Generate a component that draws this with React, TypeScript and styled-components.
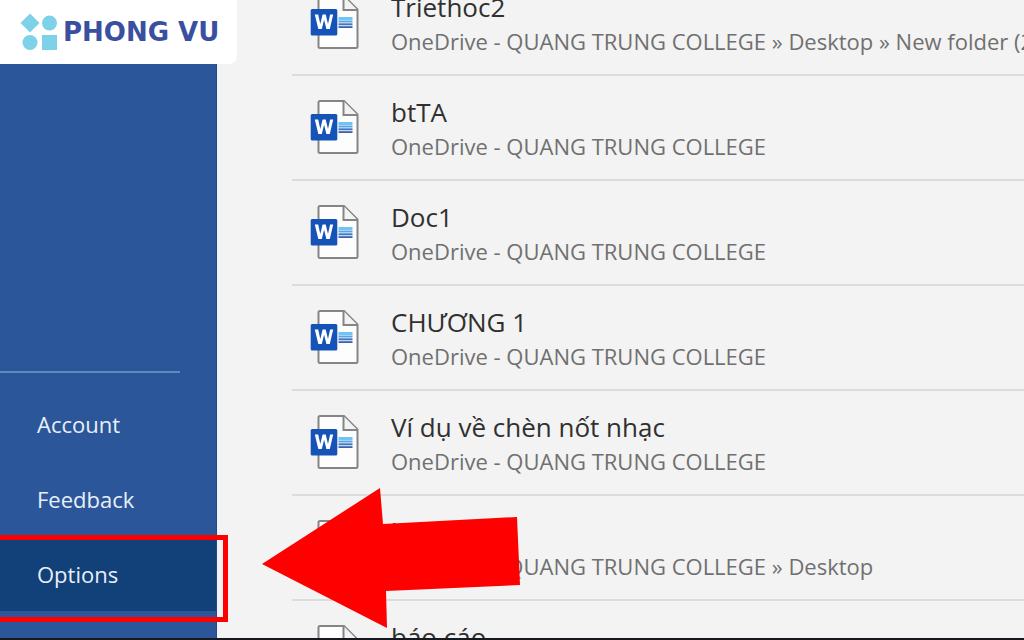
import React from 'react';
import styled, { createGlobalStyle } from 'styled-components';

const GlobalStyle = createGlobalStyle`
  *, *::before, *::after { box-sizing: border-box; }
  body { margin: 0; background: #f3f3f3; }
  body, button { font-family: "Open Sans", "Noto Sans", sans-serif; }
`;

const Screen = styled.div`
  position: relative;
  display: flex;
  height: 100vh;
  overflow: hidden;
  border-bottom: 2px solid #15181f;
`;

const Sidebar = styled.aside`
  display: flex;
  flex-direction: column;
  flex: none;
  width: 217px;
  background: #2b579a;
  border-right: 1px solid #204a8c;
`;

const Nav = styled.nav`
  display: flex;
  flex-direction: column;
  margin-top: auto;
  padding-bottom: 27px;
`;

const Divider = styled.hr`
  width: 180px;
  height: 2px;
  margin: 0 0 13px;
  border: 0;
  background: #6289bd;
`;

const NavButton = styled.button<{ $active?: boolean }>`
  height: 75px;
  padding: 0 37px;
  border: 0;
  background: ${(p) => (p.$active ? '#124078' : 'transparent')};
  color: #e9eff8;
  font-size: 22px;
  line-height: 30px;
  text-align: left;
`;

const Main = styled.main`
  flex: 1;
  min-width: 0;
  padding-left: 75px;
`;

const FileList = styled.ul`
  margin: -29px 0 0;
  padding: 0;
  list-style: none;
`;

const FileRow = styled.li`
  border-bottom: 2px solid #dcdcdc;
`;

const FileLink = styled.a`
  display: flex;
  align-items: center;
  gap: 31px;
  height: 103px;
  padding-left: 18px;
  color: inherit;
  text-decoration: none;
  white-space: nowrap;
`;

const FileText = styled.div`
  display: flex;
  flex-direction: column;
`;

const FileName = styled.span`
  color: #303030;
  font-size: 26px;
  line-height: 36px;
`;

const FilePath = styled.span`
  color: #707070;
  font-size: 22px;
  line-height: 32px;
`;

const Icon = styled.svg`
  flex: none;
`;

const Brand = styled.header`
  position: absolute;
  top: 0;
  left: 0;
  display: flex;
  align-items: center;
  gap: 5px;
  width: 237px;
  height: 64px;
  padding-left: 20px;
  border-radius: 0 0 8px 0;
  background: #fff;
`;

const BrandName = styled.span`
  color: #3b4fa0;
  font-family: "DejaVu Sans", sans-serif;
  font-size: 26px;
  font-weight: 700;
  line-height: 30px;
  white-space: nowrap;
`;

const Highlight = styled.div`
  position: absolute;
  bottom: 16px;
  left: 0;
  width: 228px;
  height: 87px;
  border: 5px solid #fe0000;
  border-left: 0;
  pointer-events: none;
`;

const Arrow = styled.svg`
  position: absolute;
  bottom: 9px;
  left: 262px;
  pointer-events: none;
`;

const files = [
  { name: 'Triethoc2', path: 'OneDrive - QUANG TRUNG COLLEGE » Desktop » New folder (2)' },
  { name: 'btTA', path: 'OneDrive - QUANG TRUNG COLLEGE' },
  { name: 'Doc1', path: 'OneDrive - QUANG TRUNG COLLEGE' },
  { name: 'CHƯƠNG 1', path: 'OneDrive - QUANG TRUNG COLLEGE' },
  { name: 'Ví dụ về chèn nốt nhạc', path: 'OneDrive - QUANG TRUNG COLLEGE' },
  { name: 'b', path: 'OneDrive - QUANG TRUNG COLLEGE » Desktop' },
  { name: 'báo cáo', path: 'OneDrive - QUANG TRUNG COLLEGE' },
];

function WordIcon() {
  return (
    <Icon width="50" height="56" viewBox="0 0 50 56" aria-hidden="true">
      <path d="M10 1H34L47.500 14.500V51.500Q47.500 53 46 53H10Q8.500 53 8.500 51.500V2.500Q8.500 1 10 1Z" fill="#fdfdfd" stroke="#858585" strokeWidth="2" />
      <path d="M33.500 1V15H47.500" fill="#f3f3f3" stroke="#858585" strokeWidth="2" />
      <path d="M28.500 22H42.500V25H28.500Z" fill="#6fc4f6" />
      <path d="M28.500 25.500H42.500V27.500H28.500Z" fill="#5aa2e4" />
      <path d="M28.500 28.300H42.500V30.300H28.500Z" fill="#3f78c8" />
      <path d="M28.500 31.200H42.500V33H28.500Z" fill="#3a62ac" />
      <rect x="0.700" y="14" width="26.600" height="26.500" rx="1.500" fill="#1553b8" />
      <path d="M4.800 19.500H8.200L10.300 29L12.600 19.500H15.700L18 29L20.100 19.500H23.200L19.800 34H16.400L14.100 24.800L11.800 34H8.300Z" fill="#fff" />
    </Icon>
  );
}

export default function App() {
  return (
    <>
      <GlobalStyle />
      <Screen>
        <Sidebar>
          <Nav>
            <Divider />
            <NavButton type="button">Account</NavButton>
            <NavButton type="button">Feedback</NavButton>
            <NavButton type="button" $active>Options</NavButton>
          </Nav>
        </Sidebar>
        <Main>
          <FileList>
            {files.map((file) => (
              <FileRow key={file.name}>
                <FileLink href="#">
                  <WordIcon />
                  <FileText>
                    <FileName>{file.name}</FileName>
                    <FilePath>{file.path}</FilePath>
                  </FileText>
                </FileLink>
              </FileRow>
            ))}
          </FileList>
        </Main>
        <Brand>
          <Icon width="38" height="38" viewBox="0 0 38 38" aria-hidden="true">
            <g fill="#7dd2ea">
              <path d="M10 0.500L19.500 10L10 19.500L0.500 10Z" />
              <circle cx="29.500" cy="10" r="7.500" />
              <circle cx="10" cy="29.500" r="7.500" />
              <rect x="22" y="22" width="15" height="15" />
            </g>
          </Icon>
          <BrandName>PHONG VU</BrandName>
        </Brand>
        <Highlight />
        <Arrow width="259" height="141" viewBox="0 0 259 141" aria-hidden="true">
          <path d="M0 76L118 0L121 36L255 29L258 97L124 103L125 140Z" fill="#fe0000" />
        </Arrow>
      </Screen>
    </>
  );
}
